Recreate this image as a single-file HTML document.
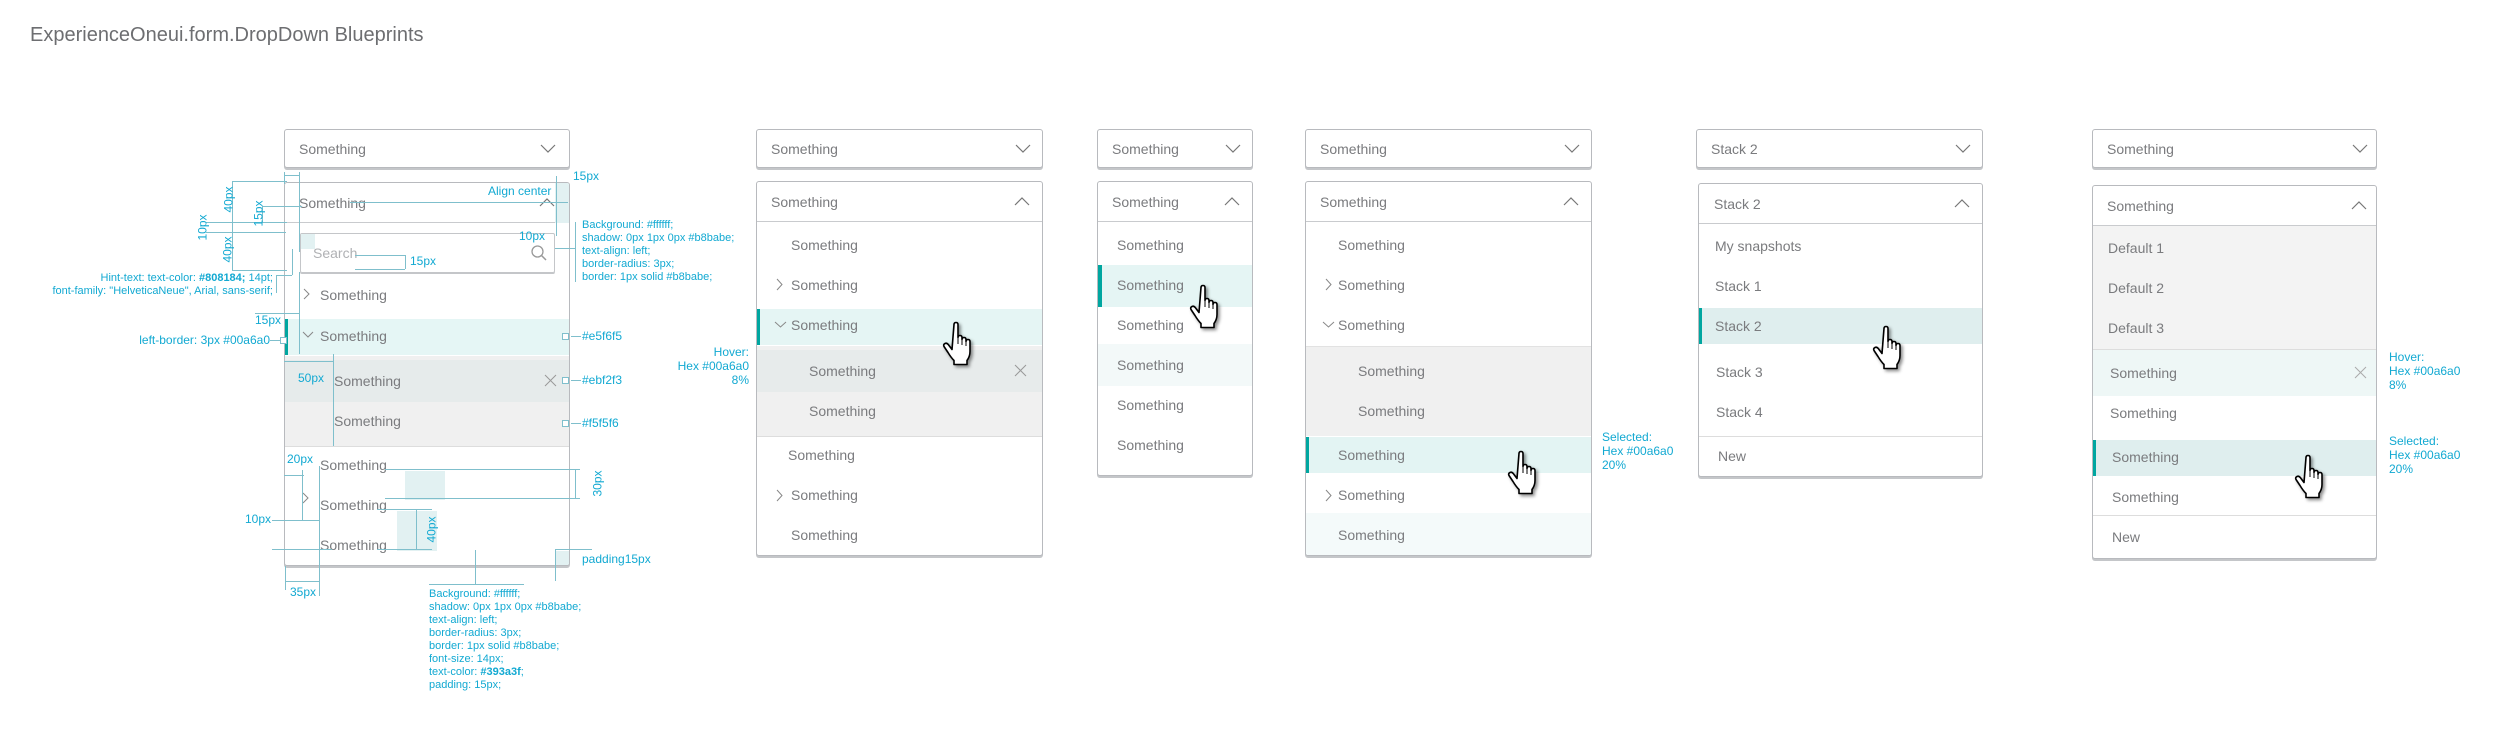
<!DOCTYPE html>
<html><head><meta charset="utf-8">
<style>
*{margin:0;padding:0;box-sizing:border-box}
body{width:2509px;height:738px;background:#fff;position:relative;overflow:hidden;font-family:"Liberation Sans",Arial,sans-serif;color:#77787b}
.a{position:absolute}
.box{position:absolute;background:#fff;border:1px solid #b8babe;border-radius:3px;box-shadow:0 2px 0 #c4c6c9;overflow:hidden}
.t{position:absolute;font-size:14px;line-height:16px;white-space:nowrap;color:#7a7b7e}
.row{position:absolute;left:0;right:0}
.sep{position:absolute;left:0;right:0;height:1px;background:#c9cbce}
.bar{position:absolute;left:0;top:0;bottom:0;width:4px;background:#00a6a0}
.c{position:absolute;font-size:11px;line-height:13px;color:#12a9d2;white-space:nowrap}
.l{position:absolute;background:#7fbfcc}
.blk{position:absolute;background:#e2f1f2}
.sq{position:absolute;width:7px;height:7px;border:1px solid #7fbfcc;background:#fff}
svg{position:absolute;overflow:visible}
</style></head><body>

<div class="a" style="left:30px;top:24px;font-size:20px;color:#6d6e71;white-space:nowrap">ExperienceOneui.form.DropDown Blueprints</div>

<!-- ========== D0 blueprint ========== -->
<div class="box" style="left:284px;top:129px;width:286px;height:39px">
  <div class="t" style="left:14px;top:11px">Something</div>
  <svg style="left:256px;top:15px" width="14" height="8"><polyline points="0,0 7,7 14,0" fill="none" stroke="#777" stroke-width="1.2"/></svg>
</div>
<div class="box" style="left:284px;top:182px;width:286px;height:384px">
  <div class="t" style="left:14px;top:12px">Something</div>
  <svg style="left:255px;top:16px" width="14" height="8"><polyline points="0,7 7,0 14,7" fill="none" stroke="#777" stroke-width="1.2"/></svg>
  <div class="sep" style="top:39px"></div>
  <div class="a" style="left:15px;top:50px;width:255px;height:40px;border:1px solid #c4c6c9;border-radius:2px;box-shadow:0 1px 0 #c4c6c9"></div>
  <div class="blk" style="left:16px;top:51px;width:14px;height:15px"></div>
  <div class="t" style="left:28px;top:62px;color:#b0b1b4">Search</div>
  <svg style="left:246px;top:62px" width="16" height="16"><circle cx="6.5" cy="6.5" r="5.5" fill="none" stroke="#999" stroke-width="1.3"/><line x1="10.5" y1="10.5" x2="15" y2="15" stroke="#999" stroke-width="1.5"/></svg>
  <svg style="left:19px;top:106px" width="6" height="10"><polyline points="0,0 5,5 0,10" fill="none" stroke="#888" stroke-width="1"/></svg>
  <div class="t" style="left:35px;top:104px">Something</div>
  <div class="row" style="top:136px;height:36px;background:#e5f6f5"><div class="bar" style="width:3px"></div></div>
  <svg style="left:18px;top:149px" width="10" height="6"><polyline points="0,0 5,5 10,0" fill="none" stroke="#888" stroke-width="1"/></svg>
  <div class="t" style="left:35px;top:145px">Something</div>
  <div class="row" style="top:173px;height:90px;background:#f0f0f0"></div>
  <div class="row" style="top:177px;height:42px;background:#e6ebeb"></div>
  <div class="t" style="left:49px;top:190px">Something</div>
  <svg style="left:260px;top:192px" width="11" height="11"><path d="M0 0L11 11M11 0L0 11" stroke="#999" stroke-width="1"/></svg>
  <div class="t" style="left:49px;top:230px">Something</div>
  <div class="sep" style="top:263px;background:#ddd"></div>
  <div class="t" style="left:35px;top:274px">Something</div>
  <svg style="left:18px;top:310px" width="6" height="10"><polyline points="0,0 5,5 0,10" fill="none" stroke="#888" stroke-width="1"/></svg>
  <div class="t" style="left:35px;top:314px">Something</div>
  <div class="t" style="left:35px;top:354px">Something</div>
  <div class="blk" style="left:120px;top:288px;width:40px;height:29px"></div>
  <div class="blk" style="left:112px;top:328px;width:40px;height:40px"></div>
  <div class="blk" style="left:270px;top:0;width:15px;height:40px"></div>
  <div class="blk" style="left:270px;top:368px;width:15px;height:15px"></div>
</div>
<!-- D0 annotation lines -->
<div class="l" style="left:284px;top:172px;width:1px;height:12px"></div>
<div class="l" style="left:299px;top:172px;width:1px;height:80px"></div>
<div class="l" style="left:284px;top:175px;width:15px;height:1px"></div>
<div class="l" style="left:350px;top:202px;width:218px;height:1px"></div>
<div class="l" style="left:232px;top:181px;width:55px;height:1px"></div>
<div class="l" style="left:232px;top:222px;width:55px;height:1px"></div>
<div class="l" style="left:232px;top:270px;width:55px;height:1px"></div>
<div class="l" style="left:232px;top:181px;width:1px;height:90px"></div>
<div class="l" style="left:206px;top:222px;width:80px;height:1px"></div>
<div class="l" style="left:206px;top:232px;width:80px;height:1px"></div>
<div class="l" style="left:262px;top:206px;width:1px;height:16px"></div>
<div class="l" style="left:262px;top:206px;width:40px;height:1px"></div>
<div class="l" style="left:556px;top:176px;width:1px;height:60px"></div>
<div class="l" style="left:555px;top:248px;width:20px;height:1px"></div>
<div class="l" style="left:575px;top:222px;width:1px;height:60px"></div>
<div class="l" style="left:355px;top:255px;width:50px;height:1px"></div>
<div class="l" style="left:405px;top:255px;width:1px;height:14px"></div>
<div class="l" style="left:355px;top:269px;width:50px;height:1px"></div>
<div class="l" style="left:292px;top:249px;width:1px;height:26px"></div>
<div class="l" style="left:276px;top:275px;width:16px;height:1px"></div>
<div class="l" style="left:276px;top:275px;width:1px;height:18px"></div>
<div class="l" style="left:299px;top:272px;width:1px;height:82px"></div>
<div class="l" style="left:255px;top:313px;width:45px;height:1px"></div>
<div class="l" style="left:270px;top:340px;width:14px;height:1px"></div>
<div class="l" style="left:333px;top:354px;width:1px;height:92px"></div>
<div class="l" style="left:284px;top:361px;width:49px;height:1px"></div>
<div class="l" style="left:571px;top:336px;width:10px;height:1px"></div>
<div class="l" style="left:571px;top:380px;width:10px;height:1px"></div>
<div class="l" style="left:571px;top:423px;width:10px;height:1px"></div>
<div class="sq" style="left:562px;top:333px"></div>
<div class="sq" style="left:562px;top:377px"></div>
<div class="sq" style="left:562px;top:420px"></div>
<div class="sq" style="left:280px;top:337px"></div>
<div class="l" style="left:319px;top:466px;width:1px;height:130px"></div>
<div class="l" style="left:284px;top:475px;width:20px;height:1px"></div>
<div class="l" style="left:302px;top:470px;width:1px;height:50px"></div>
<div class="l" style="left:272px;top:520px;width:48px;height:1px"></div>
<div class="l" style="left:272px;top:549px;width:60px;height:1px"></div>
<div class="l" style="left:385px;top:469px;width:195px;height:1px"></div>
<div class="l" style="left:385px;top:498px;width:195px;height:1px"></div>
<div class="l" style="left:575px;top:469px;width:1px;height:30px"></div>
<div class="l" style="left:377px;top:509px;width:55px;height:1px"></div>
<div class="l" style="left:377px;top:549px;width:55px;height:1px"></div>
<div class="l" style="left:416px;top:509px;width:1px;height:40px"></div>
<div class="l" style="left:475px;top:550px;width:1px;height:34px"></div>
<div class="l" style="left:429px;top:584px;width:95px;height:1px"></div>
<div class="l" style="left:555px;top:549px;width:1px;height:32px"></div>
<div class="l" style="left:555px;top:549px;width:37px;height:1px"></div>
<div class="l" style="left:285px;top:566px;width:1px;height:24px"></div>
<div class="l" style="left:285px;top:581px;width:34px;height:1px"></div>

<div class="c" style="left:488px;top:185px;font-size:12px">Align center</div>
<div class="c" style="left:573px;top:170px;font-size:12px">15px</div>
<div class="c" style="left:519px;top:230px;font-size:12px">10px</div>
<div class="c" style="left:410px;top:255px;font-size:12px">15px</div>
<div class="c" style="left:582px;top:219px">Background: #ffffff;<br>shadow: 0px 1px 0px #b8babe;<br>text-align: left;<br>border-radius: 3px;<br>border: 1px solid #b8babe;</div>
<div class="c" style="right:2236px;top:272px;text-align:right">Hint-text: text-color: <b>#808184;</b> 14pt;<br>font-family: "HelveticaNeue", Arial, sans-serif;</div>
<div class="c" style="left:255px;top:314px;font-size:12px">15px</div>
<div class="c" style="right:2239px;top:334px;font-size:12px">left-border: 3px #00a6a0</div>
<div class="c" style="left:582px;top:330px;font-size:12px">#e5f6f5</div>
<div class="c" style="left:582px;top:374px;font-size:12px">#ebf2f3</div>
<div class="c" style="left:582px;top:417px;font-size:12px">#f5f5f6</div>
<div class="c" style="left:298px;top:372px;font-size:12px">50px</div>
<div class="c" style="left:216px;top:193px;transform:rotate(-90deg);font-size:12px">40px</div>
<div class="c" style="left:246px;top:207px;transform:rotate(-90deg);font-size:12px">15px</div>
<div class="c" style="left:190px;top:221px;transform:rotate(-90deg);font-size:12px">10px</div>
<div class="c" style="left:215px;top:243px;transform:rotate(-90deg);font-size:12px">40px</div>
<div class="c" style="left:287px;top:453px;font-size:12px">20px</div>
<div class="c" style="left:245px;top:513px;font-size:12px">10px</div>
<div class="c" style="left:585px;top:477px;transform:rotate(-90deg);font-size:12px">30px</div>
<div class="c" style="left:419px;top:523px;transform:rotate(-90deg);font-size:12px">40px</div>
<div class="c" style="left:582px;top:553px;font-size:12px">padding15px</div>
<div class="c" style="left:290px;top:586px;font-size:12px">35px</div>
<div class="c" style="left:429px;top:588px">Background: #ffffff;<br>shadow: 0px 1px 0px #b8babe;<br>text-align: left;<br>border-radius: 3px;<br>border: 1px solid #b8babe;<br>font-size: 14px;<br>text-color: <b>#393a3f</b>;<br>padding: 15px;</div>

<!-- ========== D1 ========== -->
<div class="box" style="left:756px;top:129px;width:287px;height:39px">
  <div class="t" style="left:14px;top:11px">Something</div>
  <svg style="left:259px;top:15px" width="14" height="8"><polyline points="0,0 7,7 14,0" fill="none" stroke="#777" stroke-width="1.2"/></svg>
</div>
<div class="box" style="left:756px;top:181px;width:287px;height:375px">
  <div class="t" style="left:14px;top:12px">Something</div>
  <svg style="left:258px;top:16px" width="14" height="8"><polyline points="0,7 7,0 14,7" fill="none" stroke="#777" stroke-width="1.2"/></svg>
  <div class="sep" style="top:39px"></div>
  <div class="t" style="left:34px;top:55px">Something</div>
  <svg style="left:20px;top:97px" width="6" height="11"><polyline points="0,0 5,5.5 0,11" fill="none" stroke="#888" stroke-width="1"/></svg>
  <div class="t" style="left:34px;top:95px">Something</div>
  <div class="row" style="top:127px;height:36px;background:#e5f5f4"><div class="bar" style="width:3px"></div></div>
  <svg style="left:18px;top:140px" width="11" height="6"><polyline points="0,0 5.5,5 11,0" fill="none" stroke="#888" stroke-width="1"/></svg>
  <div class="t" style="left:34px;top:135px">Something</div>
  <div class="row" style="top:164px;height:90px;background:#f0f0f0"></div>
  <div class="row" style="top:168px;height:42px;background:#e7ebeb"></div>
  <div class="t" style="left:52px;top:181px">Something</div>
  <svg style="left:258px;top:183px" width="11" height="11"><path d="M0 0L11 11M11 0L0 11" stroke="#999" stroke-width="1"/></svg>
  <div class="t" style="left:52px;top:221px">Something</div>
  <div class="sep" style="top:254px;background:#ddd"></div>
  <div class="t" style="left:31px;top:265px">Something</div>
  <svg style="left:20px;top:308px" width="6" height="11"><polyline points="0,0 5,5.5 0,11" fill="none" stroke="#888" stroke-width="1"/></svg>
  <div class="t" style="left:34px;top:305px">Something</div>
  <div class="t" style="left:34px;top:345px">Something</div>
</div>
<div class="c" style="right:1760px;top:345px;text-align:right;font-size:12px;line-height:14px">Hover:<br>Hex #00a6a0<br>8%</div>

<!-- ========== D2 ========== -->
<div class="box" style="left:1097px;top:129px;width:156px;height:39px">
  <div class="t" style="left:14px;top:11px">Something</div>
  <svg style="left:128px;top:15px" width="14" height="8"><polyline points="0,0 7,7 14,0" fill="none" stroke="#777" stroke-width="1.2"/></svg>
</div>
<div class="box" style="left:1097px;top:181px;width:156px;height:295px">
  <div class="t" style="left:14px;top:12px">Something</div>
  <svg style="left:127px;top:16px" width="14" height="8"><polyline points="0,7 7,0 14,7" fill="none" stroke="#777" stroke-width="1.2"/></svg>
  <div class="sep" style="top:39px"></div>
  <div class="t" style="left:19px;top:55px">Something</div>
  <div class="row" style="top:83px;height:42px;background:#e5f5f4"><div class="bar"></div></div>
  <div class="t" style="left:19px;top:95px">Something</div>
  <div class="t" style="left:19px;top:135px">Something</div>
  <div class="row" style="top:162px;height:42px;background:#f3f9f9"></div>
  <div class="t" style="left:19px;top:175px">Something</div>
  <div class="t" style="left:19px;top:215px">Something</div>
  <div class="t" style="left:19px;top:255px">Something</div>
</div>

<!-- ========== D3 ========== -->
<div class="box" style="left:1305px;top:129px;width:287px;height:39px">
  <div class="t" style="left:14px;top:11px">Something</div>
  <svg style="left:259px;top:15px" width="14" height="8"><polyline points="0,0 7,7 14,0" fill="none" stroke="#777" stroke-width="1.2"/></svg>
</div>
<div class="box" style="left:1305px;top:181px;width:287px;height:375px">
  <div class="t" style="left:14px;top:12px">Something</div>
  <svg style="left:258px;top:16px" width="14" height="8"><polyline points="0,7 7,0 14,7" fill="none" stroke="#777" stroke-width="1.2"/></svg>
  <div class="sep" style="top:39px"></div>
  <div class="t" style="left:32px;top:55px">Something</div>
  <svg style="left:20px;top:97px" width="6" height="11"><polyline points="0,0 5,5.5 0,11" fill="none" stroke="#888" stroke-width="1"/></svg>
  <div class="t" style="left:32px;top:95px">Something</div>
  <svg style="left:17px;top:140px" width="11" height="6"><polyline points="0,0 5.5,5 11,0" fill="none" stroke="#888" stroke-width="1"/></svg>
  <div class="t" style="left:32px;top:135px">Something</div>
  <div class="row" style="top:164px;height:90px;background:#f0f0f0"></div>
  <div class="sep" style="top:164px;background:#e2e2e2"></div>
  <div class="t" style="left:52px;top:181px">Something</div>
  <div class="t" style="left:52px;top:221px">Something</div>
  <div class="row" style="top:255px;height:36px;background:#e3f4f3"><div class="bar" style="width:3px"></div></div>
  <div class="t" style="left:32px;top:265px">Something</div>
  <svg style="left:20px;top:308px" width="6" height="11"><polyline points="0,0 5,5.5 0,11" fill="none" stroke="#888" stroke-width="1"/></svg>
  <div class="t" style="left:32px;top:305px">Something</div>
  <div class="row" style="top:331px;height:44px;background:#f4fafa"></div>
  <div class="t" style="left:32px;top:345px">Something</div>
</div>
<div class="c" style="left:1602px;top:430px;font-size:12px;line-height:14px">Selected:<br>Hex #00a6a0<br>20%</div>

<!-- ========== D4 ========== -->
<div class="box" style="left:1696px;top:129px;width:287px;height:39px">
  <div class="t" style="left:14px;top:11px">Stack 2</div>
  <svg style="left:259px;top:15px" width="14" height="8"><polyline points="0,0 7,7 14,0" fill="none" stroke="#777" stroke-width="1.2"/></svg>
</div>
<div class="box" style="left:1698px;top:183px;width:285px;height:294px">
  <div class="t" style="left:15px;top:12px">Stack 2</div>
  <svg style="left:256px;top:16px" width="14" height="8"><polyline points="0,7 7,0 14,7" fill="none" stroke="#777" stroke-width="1.2"/></svg>
  <div class="sep" style="top:39px"></div>
  <div class="t" style="left:16px;top:54px">My snapshots</div>
  <div class="t" style="left:16px;top:94px">Stack 1</div>
  <div class="row" style="top:124px;height:36px;background:#dfeeee"><div class="bar" style="width:3px"></div></div>
  <div class="t" style="left:16px;top:134px">Stack 2</div>
  <div class="t" style="left:17px;top:180px">Stack 3</div>
  <div class="t" style="left:17px;top:220px">Stack 4</div>
  <div class="sep" style="top:252px;background:#ddd"></div>
  <div class="t" style="left:19px;top:264px">New</div>
</div>

<!-- ========== D5 ========== -->
<div class="box" style="left:2092px;top:129px;width:285px;height:39px">
  <div class="t" style="left:14px;top:11px">Something</div>
  <svg style="left:260px;top:15px" width="14" height="8"><polyline points="0,0 7,7 14,0" fill="none" stroke="#777" stroke-width="1.2"/></svg>
</div>
<div class="box" style="left:2092px;top:185px;width:285px;height:374px">
  <div class="t" style="left:14px;top:12px">Something</div>
  <svg style="left:259px;top:16px" width="14" height="8"><polyline points="0,7 7,0 14,7" fill="none" stroke="#777" stroke-width="1.2"/></svg>
  <div class="sep" style="top:39px"></div>
  <div class="row" style="top:40px;height:123px;background:#f3f3f3"></div>
  <div class="t" style="left:15px;top:54px">Default 1</div>
  <div class="t" style="left:15px;top:94px">Default 2</div>
  <div class="t" style="left:15px;top:134px">Default 3</div>
  <div class="sep" style="top:163px;background:#ddd"></div>
  <div class="row" style="top:164px;height:46px;background:#eef7f6"></div>
  <div class="t" style="left:17px;top:179px">Something</div>
  <svg style="left:262px;top:181px" width="11" height="11"><path d="M0 0L11 11M11 0L0 11" stroke="#aaa" stroke-width="1"/></svg>
  <div class="t" style="left:17px;top:219px">Something</div>
  <div class="row" style="top:254px;height:36px;background:#dfeeee"><div class="bar" style="width:3px"></div></div>
  <div class="t" style="left:19px;top:263px">Something</div>
  <div class="t" style="left:19px;top:303px">Something</div>
  <div class="sep" style="top:329px;background:#ddd"></div>
  <div class="t" style="left:19px;top:343px">New</div>
</div>
<div class="c" style="left:2389px;top:350px;font-size:12px;line-height:14px">Hover:<br>Hex #00a6a0<br>8%</div>
<div class="c" style="left:2389px;top:434px;font-size:12px;line-height:14px">Selected:<br>Hex #00a6a0<br>20%</div>

<!-- cursors -->
<svg width="0" height="0" style="position:absolute"><defs>
<filter id="sh" x="-30%" y="-30%" width="160%" height="160%"><feDropShadow dx="2" dy="2" stdDeviation="1.5" flood-color="#000" flood-opacity=".45"/></filter>
<g id="hand"><path filter="url(#sh)" d="M9 2.5q0-2 2-2t2 2v13q0-2 2-2t2 2v2q0-2 2-2t2 2v2q0-2 2-2t2 2v10q0 5-3 9v4h-13v-4q-3-3-6-8l-4-6q-1-2 1-3t4 2l3 4z" fill="#fff" stroke="#000" stroke-width="1.6" stroke-linejoin="round"/>
<path d="M13 16v6M17 18v5M21 20v4" stroke="#000" stroke-width="1"/></g>
</defs></svg>
<svg style="left:945px;top:322px" width="30" height="46"><use href="#hand"/></svg>
<svg style="left:1192px;top:285px" width="30" height="46"><use href="#hand"/></svg>
<svg style="left:1510px;top:451px" width="30" height="46"><use href="#hand"/></svg>
<svg style="left:1875px;top:326px" width="30" height="46"><use href="#hand"/></svg>
<svg style="left:2297px;top:455px" width="30" height="46"><use href="#hand"/></svg>

</body></html>
